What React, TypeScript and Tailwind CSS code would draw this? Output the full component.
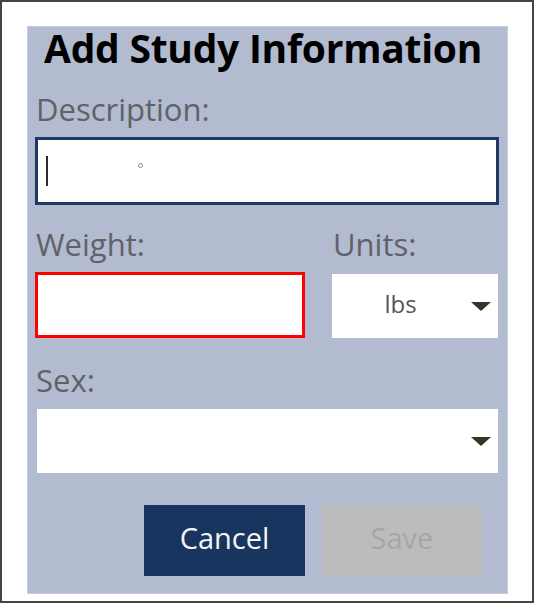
import React from "react";

const font = { fontFamily: '"Open Sans", "Noto Sans", sans-serif' };

function Caret() {
  return (
    <svg width="20" height="9" viewBox="0 0 20 9" className="shrink-0">
      <polygon points="0,0 20,0 10,9" fill="#3a3224" />
    </svg>
  );
}

export default function App() {
  return (
    <div
      className="w-[534px] h-[603px] bg-white border-2 border-[#444444] pt-[24px] pl-[25px]"
      style={font}
    >
      <div className="w-[481px] h-[568px] bg-[#b2bbcf] border border-[#c6cddc] flex flex-col">
        <h1 className="mt-[1px] h-[40px] leading-[40px] pl-[16px] text-[39px] font-bold text-black tracking-[-0.25px] whitespace-nowrap">
          Add Study Information
        </h1>

        <label className="mt-[26px] h-[31px] leading-[31px] pl-[8px] text-[31px] text-[#606268]">
          Description:
        </label>
        <div className="mt-[12px] ml-[7px] w-[464px] h-[68px] bg-white border-[3px] border-[#1c3a66] relative flex items-center pl-[8px]">
          <span className="block w-[2px] h-[30px] bg-[#2a2a2a]" />
          <span className="absolute left-[100px] top-[23px] w-[5px] h-[5px] rounded-full border border-[#8a8a8a]" />
        </div>

        <div className="mt-[24px] flex pl-[8px] h-[31px]">
          <label className="w-[297px] leading-[31px] text-[31px] text-[#606268]">
            Weight:
          </label>
          <label className="leading-[31px] text-[31px] text-[#606268]">
            Units:
          </label>
        </div>
        <div className="mt-[12px] flex items-start pl-[7px]">
          <div className="w-[270px] h-[66px] bg-white border-[3px] border-[#ff0000]" />
          <div className="mt-[2px] ml-[27px] w-[166px] h-[64px] bg-white flex items-center pr-[7px]">
            <span className="flex-1 text-center text-[24px] text-[#555555] pb-[4px] pr-[2px]">lbs</span>
            <Caret />
          </div>
        </div>

        <label className="mt-[27px] h-[31px] leading-[31px] pl-[8px] text-[31px] text-[#606268]">
          Sex:
        </label>
        <div className="mt-[13px] ml-[9px] w-[461px] h-[64px] bg-white flex items-center justify-end pr-[7px]">
          <Caret />
        </div>

        <div className="mt-[32px] flex pl-[116px] gap-[17px]">
          <button className="w-[161px] h-[71px] bg-[#18355f] text-[29px] text-[#f4f4f4] pb-[5px]">
            Cancel
          </button>
          <button className="w-[160px] h-[71px] bg-[#bcbcbc] text-[29px] text-[#a6a6a6] pb-[5px]">
            Save
          </button>
        </div>
      </div>
    </div>
  );
}
